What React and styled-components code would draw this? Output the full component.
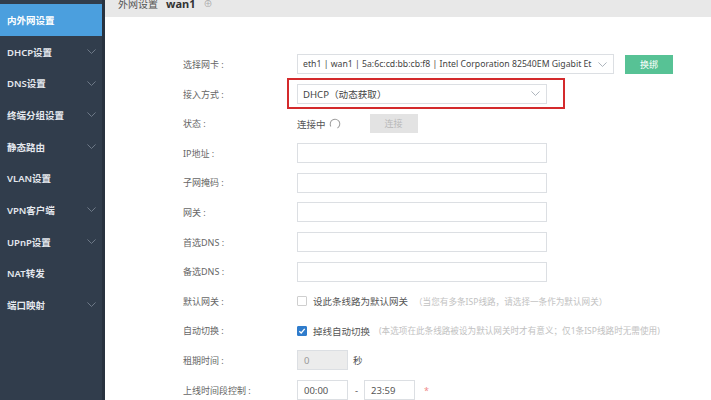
import React from "react";
import styled, { createGlobalStyle } from "styled-components";

const GlobalStyle = createGlobalStyle`
  html, body {
    margin: 0;
    padding: 0;
    background: #fff;
    font-family: "Noto Sans", "Noto Sans CJK SC", sans-serif;
  }
`;

const Page = styled.div`
  display: flex;
  width: 711px;
  height: 400px;
  overflow: hidden;
`;

const Sidebar = styled.nav`
  width: 102px;
  flex-shrink: 0;
  background: #313d4c;
  border-right: 3px solid #28323f;
  padding-top: 4px;
  box-sizing: content-box;
`;

const NavItem = styled.div`
  height: 31.7px;
  display: flex;
  align-items: center;
  justify-content: space-between;
  padding: 0 6px 0 7px;
  font-family: "Noto Sans", "Noto Sans CJK SC", sans-serif;
  font-size: 9.5px;
  font-weight: 600;
  color: ${(p) => (p.$active ? "#ffffff" : "#e4e8ee")};
  background: ${(p) => (p.$active ? "#4b9fde" : "transparent")};
`;

const Main = styled.main`
  flex: 1;
  min-width: 0;
  display: flex;
  flex-direction: column;
`;

const TopBar = styled.div`
  height: 18px;
  background: #e8e8e8;
  overflow: hidden;
  display: flex;
  align-items: flex-end;
  gap: 8px;
  padding: 0 0 8px 13px;
  box-sizing: border-box;
  font-size: 10px;
  line-height: 10px;
  color: #555;
`;

const TopTitle = styled.span`
  font-weight: 700;
  color: #333;
  font-size: 11px;
`;

const Plus = styled.span`
  color: #aaa;
  font-size: 9px;
`;

const Form = styled.div`
  display: grid;
  grid-template-columns: 114px auto;
  grid-auto-rows: 20px;
  row-gap: 9.6px;
  padding: 37px 0 0 78px;
`;

const Label = styled.div`
  display: flex;
  align-items: center;
  font-size: 9px;
  color: #666;
  white-space: nowrap;
`;

const Cell = styled.div`
  display: flex;
  align-items: center;
  white-space: nowrap;
`;

const SelectBox = styled.div`
  width: ${(p) => p.$w}px;
  height: 20px;
  box-sizing: border-box;
  border: 1px solid #dcdfe3;
  display: flex;
  align-items: center;
  justify-content: space-between;
  gap: 4px;
  padding: 0 6px 0 5px;
  font-size: ${(p) => p.$fs || 9.6}px;
  color: #444;
  background: #fff;
`;

const SelectText = styled.span`
  overflow: hidden;
  white-space: nowrap;
  flex: 1;
`;

const Highlight = styled.div`
  position: relative;
  &::after {
    content: "";
    position: absolute;
    top: -6px;
    bottom: -5px;
    left: -10px;
    right: -18px;
    border: 2px solid #d42a2c;
    pointer-events: none;
  }
`;

const Button = styled.div`
  width: ${(p) => p.$w || 48}px;
  height: 19px;
  margin-left: ${(p) => p.$ml || 0}px;
  display: flex;
  align-items: center;
  justify-content: center;
  font-size: 9px;
  color: ${(p) => (p.$disabled ? "#b9b9b9" : "#fff")};
  background: ${(p) => (p.$disabled ? "#e3e3e3" : "#57c295")};
`;

const Input = styled.div`
  width: ${(p) => p.$w || 250}px;
  height: 20px;
  box-sizing: border-box;
  border: 1px solid #dcdfe3;
  background: ${(p) => (p.$disabled ? "#ececec" : "#fff")};
  display: flex;
  align-items: center;
  padding-left: 6px;
  font-size: 9.5px;
  color: ${(p) => (p.$disabled ? "#999" : "#555")};
`;

const Text = styled.span`
  font-size: 9.5px;
  color: #555;
  margin-left: ${(p) => p.$ml || 0}px;
  margin-right: ${(p) => p.$mr || 0}px;
`;

const Hint = styled.span`
  font-size: 8.6px;
  color: #c2c2c2;
  margin-left: ${(p) => p.$ml || 8}px;
`;

const Box = styled.span`
  width: 10px;
  height: 10px;
  box-sizing: border-box;
  border: 1px solid ${(p) => (p.$checked ? "#2f7ccc" : "#cfcfcf")};
  background: ${(p) => (p.$checked ? "#2f7ccc" : "#fff")};
  border-radius: 1px;
  display: flex;
  align-items: center;
  justify-content: center;
  margin-right: 6px;
`;

const Star = styled.span`
  color: #f08a8a;
  font-size: 9px;
  margin-left: 9px;
`;

const Chevron = ({ color = "#9aa3ad", size = 9 }) => (
  <svg width={size} height={size * 0.6} viewBox="0 0 10 6" fill="none">
    <polyline points="0.5,0.5 5,5 9.5,0.5" stroke={color} strokeWidth="0.9" />
  </svg>
);

const Spinner = () => (
  <svg width="12" height="12" viewBox="0 0 12 12" style={{ marginLeft: 3 }}>
    <circle
      cx="6"
      cy="6"
      r="4.8"
      fill="none"
      stroke="#9a9a9a"
      strokeWidth="1"
      strokeDasharray="22 8.2"
      transform="rotate(150 6 6)"
    />
  </svg>
);

const Check = () => (
  <svg width="8" height="8" viewBox="0 0 8 8">
    <polyline points="1.3,4.2 3.2,6 6.7,1.8" fill="none" stroke="#fff" strokeWidth="1.3" />
  </svg>
);

const navItems = [
  { label: "内外网设置", active: true },
  { label: "DHCP设置", arrow: true },
  { label: "DNS设置", arrow: true },
  { label: "终端分组设置", arrow: true },
  { label: "静态路由", arrow: true },
  { label: "VLAN设置" },
  { label: "VPN客户端", arrow: true },
  { label: "UPnP设置", arrow: true },
  { label: "NAT转发" },
  { label: "端口映射", arrow: true },
];

export default function App() {
  return (
    <>
      <GlobalStyle />
      <Page>
        <Sidebar>
          {navItems.map((item) => (
            <NavItem key={item.label} $active={item.active}>
              <span>{item.label}</span>
              {item.arrow && <Chevron color="#7d8896" />}
            </NavItem>
          ))}
        </Sidebar>
        <Main>
          <TopBar>
            <span>外网设置</span>
            <TopTitle>wan1</TopTitle>
            <Plus>⊕</Plus>
          </TopBar>
          <Form>
            <Label>选择网卡 :</Label>
            <Cell>
              <SelectBox $w={317} $fs={8.7}>
                <SelectText>eth1 | wan1 | 5a:6c:cd:bb:cb:f8 | Intel Corporation 82540EM Gigabit Et</SelectText>
                <Chevron />
              </SelectBox>
              <Button $ml={11}>换绑</Button>
            </Cell>

            <Label>接入方式 :</Label>
            <Cell>
              <Highlight>
                <SelectBox $w={250}>
                  <SelectText>DHCP（动态获取）</SelectText>
                  <Chevron />
                </SelectBox>
              </Highlight>
            </Cell>

            <Label>状态 :</Label>
            <Cell>
              <Text>连接中</Text>
              <Spinner />
              <Button $ml={29} $disabled>
                连接
              </Button>
            </Cell>

            <Label>IP地址 :</Label>
            <Cell>
              <Input />
            </Cell>

            <Label>子网掩码 :</Label>
            <Cell>
              <Input />
            </Cell>

            <Label>网关 :</Label>
            <Cell>
              <Input />
            </Cell>

            <Label>首选DNS :</Label>
            <Cell>
              <Input />
            </Cell>

            <Label>备选DNS :</Label>
            <Cell>
              <Input />
            </Cell>

            <Label>默认网关 :</Label>
            <Cell>
              <Box />
              <Text>设此条线路为默认网关</Text>
              <Hint $ml={6}>（当您有多条ISP线路，请选择一条作为默认网关）</Hint>
            </Cell>

            <Label>自动切换 :</Label>
            <Cell>
              <Box $checked>
                <Check />
              </Box>
              <Text>掉线自动切换</Text>
              <Hint $ml={9}>(本选项在此条线路被设为默认网关时才有意义；仅1条ISP线路时无需使用)</Hint>
            </Cell>

            <Label>租期时间 :</Label>
            <Cell>
              <Input $w={51} $disabled>
                0
              </Input>
              <Text $ml={5}>秒</Text>
            </Cell>

            <Label>上线时间段控制 :</Label>
            <Cell>
              <Input $w={51}>00:00</Input>
              <Text $ml={7} $mr={6}>-</Text>
              <Input $w={51}>23:59</Input>
              <Star>*</Star>
            </Cell>
          </Form>
        </Main>
      </Page>
    </>
  );
}
